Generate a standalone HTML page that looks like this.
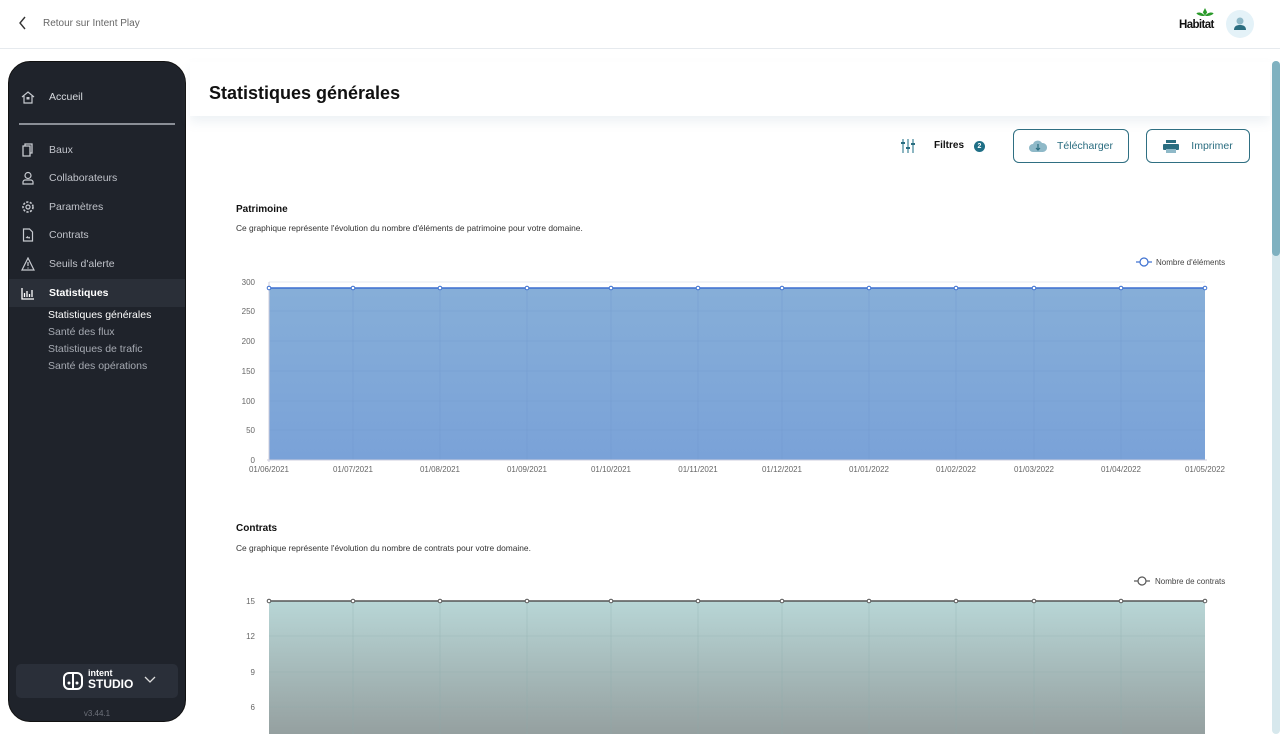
<!DOCTYPE html>
<html><head><meta charset="utf-8"><style>
*{box-sizing:border-box;margin:0;padding:0}
body{width:1280px;height:734px;overflow:hidden;background:#fff;font-family:"Liberation Sans",Arial,sans-serif;position:relative;color:#222}
.top{position:absolute;left:0;top:0;width:1280px;height:49px;border-bottom:1px solid #e6eaee;background:#fff}
.back{position:absolute;left:18px;top:16px;font-size:10px;color:#666;display:flex;align-items:center}
.back span{margin-left:15px}
.side{position:absolute;left:8px;top:61px;width:178px;height:661px;background:#1f232b;border-radius:22px;border:1px solid #111;color:#c0c3ca;font-size:10.5px}
.it{position:absolute;left:0;width:176px;height:28px;display:flex;align-items:center}
.it svg{position:absolute;left:12px}
.it span{position:absolute;left:40px}
.sub{position:absolute;left:39px;font-size:10.5px;color:#a6aab2}
.main-title{position:absolute;left:190px;top:62px;width:1080px;height:54px;background:#fff;box-shadow:0 6px 10px rgba(140,170,190,.15)}
.main-title h1{position:absolute;left:19px;top:21px;font-size:18px;font-weight:bold;color:#111}
.btn{position:absolute;top:129px;height:34px;border:1px solid #2f6f82;border-radius:6px;color:#2a6d80;font-size:10.5px;display:flex;align-items:center;justify-content:center}
.h{position:absolute;left:236px;font-size:10px;font-weight:bold;color:#111}
.d{position:absolute;left:236px;font-size:8.4px;color:#333}
.scroll{position:absolute;left:1272px;top:61px;width:8px;height:673px;background:#d7e8ed;border-radius:4px}
.thumb{position:absolute;left:0;top:0;width:8px;height:195px;background:#7fb1c0;border-radius:4px}
</style></head><body>
<div class="top">
 <div class="back"><svg width="10" height="14" viewBox="0 0 10 14"><path d="M7 1L2 7l5 6" fill="none" stroke="#333" stroke-width="1.4"/></svg><span>Retour sur Intent Play</span></div>
 <div style="position:absolute;left:1179px;top:19px;font-size:11.5px;font-weight:bold;letter-spacing:-.6px;color:#111">Habitat</div>
 <svg style="position:absolute;left:1196px;top:8px" width="18" height="13" viewBox="0 0 16 12"><path d="M8 0l2 4-2 3-2-3z M8 7C4 3 1 4 0 5c2 2 5 3 8 2z M8 7c4-4 7-3 8-2-2 2-5 3-8 2z" fill="#2a9a2a"/></svg>
 <div style="position:absolute;left:1226px;top:10px;width:28px;height:28px;border-radius:50%;background:#e4f2f8"><svg width="28" height="28" viewBox="0 0 28 28"><circle cx="14" cy="11" r="3.5" fill="#8fb9c8"/><path d="M8 20c0-4 3-5 6-5s6 1 6 5z" fill="#2a6d80"/></svg></div>
</div>
<div class="side">
 <div class="it" style="top:21px;color:#d8dbe0"><svg width="14" height="14" viewBox="0 0 14 14"><path d="M1 7L7 2l6 5M3 6v7h8V6" fill="none" stroke="#c7cad0" stroke-width="1.2"/><rect x="5.5" y="7" width="3" height="2.5" fill="#c7cad0"/></svg><span>Accueil</span></div>
 <div style="position:absolute;left:10px;top:61px;width:156px;height:2px;background:#8a8e96"></div>
 <div class="it" style="top:74px"><svg width="14" height="14" viewBox="0 0 14 14"><path d="M4 3V1h7v9H9M2 3h7v10H2z" fill="none" stroke="#c7cad0" stroke-width="1.3"/></svg><span>Baux</span></div>
 <div class="it" style="top:102px"><svg width="14" height="14" viewBox="0 0 14 14"><circle cx="7" cy="4.5" r="3" fill="none" stroke="#c7cad0" stroke-width="1.2"/><path d="M2 13v-2c0-1 1-2 2-2h6c1 0 2 1 2 2v2z" fill="none" stroke="#c7cad0" stroke-width="1.2"/></svg><span>Collaborateurs</span></div>
 <div class="it" style="top:131px"><svg width="14" height="14" viewBox="0 0 14 14"><circle cx="7" cy="7" r="2" fill="none" stroke="#c7cad0" stroke-width="1.2"/><circle cx="7" cy="7" r="5" fill="none" stroke="#c7cad0" stroke-width="1.6" stroke-dasharray="2.2 1.4"/></svg><span>Paramètres</span></div>
 <div class="it" style="top:159px"><svg width="14" height="14" viewBox="0 0 14 14"><path d="M2.5 1h6l3 3v9h-9z" fill="none" stroke="#c7cad0" stroke-width="1.2"/><path d="M4.5 10l2-2 1.5 1.5 1-1v2z" fill="#c7cad0"/></svg><span>Contrats</span></div>
 <div class="it" style="top:188px"><svg width="14" height="14" viewBox="0 0 14 14"><path d="M7 1L13 13H1z" fill="none" stroke="#c7cad0" stroke-width="1.2"/><path d="M7 5v4M7 10.5v1" stroke="#c7cad0" stroke-width="1.2"/></svg><span>Seuils d'alerte</span></div>
 <div class="it" style="top:217px;background:#2a2f38;color:#fff;font-weight:bold;height:28px"><svg width="14" height="14" viewBox="0 0 14 14"><path d="M1 2v11h12M3.5 11V7M6 11V5M8.5 11V8M11 11V4" fill="none" stroke="#fff" stroke-width="1.3"/></svg><span>Statistiques</span></div>
 <div class="sub" style="top:247px;color:#fff">Statistiques générales</div>
 <div class="sub" style="top:264px">Santé des flux</div>
 <div class="sub" style="top:281px">Statistiques de trafic</div>
 <div class="sub" style="top:298px">Santé des opérations</div>
 <div style="position:absolute;left:7px;top:602px;width:162px;height:34px;background:#2a2f39;border-radius:5px">
  <svg style="position:absolute;left:47px;top:8px" width="20" height="18" viewBox="0 0 20 18"><rect x="1" y="1" width="18" height="16" rx="5" fill="none" stroke="#fff" stroke-width="2"/><path d="M10 1v16" stroke="#fff" stroke-width="2"/><circle cx="6" cy="11" r="1.5" fill="#fff"/><circle cx="14" cy="11" r="1.5" fill="#fff"/></svg>
  <div style="position:absolute;left:72px;top:5px;color:#fff;font-size:9px;font-weight:bold;line-height:9px">intent</div>
  <div style="position:absolute;left:72px;top:14px;color:#fff;font-size:12px;font-weight:bold;line-height:13px">STUDIO</div>
  <svg style="position:absolute;left:128px;top:12px" width="12" height="8" viewBox="0 0 12 8"><path d="M1 1l5 5 5-5" fill="none" stroke="#ddd" stroke-width="1.3"/></svg>
 </div>
 <div style="position:absolute;left:0;width:176px;top:647px;text-align:center;font-size:8px;color:#6d717a">v3.44.1</div>
</div>
<div class="main-title"><h1>Statistiques générales</h1></div>
<svg style="position:absolute;left:901px;top:138px" width="14" height="16" viewBox="0 0 14 16"><path d="M2 1v14M7 1v14M12 1v14" stroke="#4f8ea0" stroke-width="1.3"/><path d="M0 5h4M5 10h4M10 6h4" stroke="#2a6d80" stroke-width="2"/></svg>
<div style="position:absolute;left:934px;top:140px;font-size:10px;font-weight:bold;color:#111">Filtres</div>
<div style="position:absolute;left:974px;top:141px;width:11px;height:11px;border-radius:50%;background:#1f6f86;color:#fff;font-size:7px;font-weight:bold;text-align:center;line-height:11px">2</div>
<div class="btn" style="left:1013px;width:116px"><svg width="18" height="12" viewBox="0 0 18 12" style="margin-right:10px"><path d="M4 12a4 4 0 010-8 5 5 0 019-1 4 4 0 011 9z" fill="#8fb9c8"/><path d="M9 4v6M7 8l2 2 2-2" stroke="#2a6d80" stroke-width="1.2" fill="none"/></svg>Télécharger</div>
<div class="btn" style="left:1146px;width:104px"><svg width="16" height="13" viewBox="0 0 16 13" style="margin-right:12px"><rect x="3" y="0" width="10" height="3" fill="#2a6d80"/><rect x="0" y="4" width="16" height="6" rx="1" fill="#2a6d80"/><rect x="3" y="9" width="10" height="4" fill="#8fb9c8"/></svg>Imprimer</div>

<div class="h" style="top:204px">Patrimoine</div>
<div class="d" style="top:223px">Ce graphique représente l'évolution du nombre d'éléments de patrimoine pour votre domaine.</div>
<div class="h" style="top:523px">Contrats</div>
<div class="d" style="top:543px">Ce graphique représente l'évolution du nombre de contrats pour votre domaine.</div>

<svg style="position:absolute;left:0;top:0" width="1270" height="734" font-family="Liberation Sans, Arial, sans-serif">
<defs>
<linearGradient id="g1" x1="0" y1="0" x2="0" y2="1"><stop offset="0" stop-color="#86aed8"/><stop offset="1" stop-color="#7aa2d8"/></linearGradient>
<linearGradient id="g2" x1="0" y1="0" x2="0" y2="1"><stop offset="0" stop-color="#b8d6d6"/><stop offset="1" stop-color="#939d9d"/></linearGradient>
</defs>
<g font-size="8" fill="#666">
<path d="M1136 262h16" stroke="#3b6fd0" stroke-width="1.2"/><circle cx="1144" cy="262" r="4" fill="#fff" stroke="#3b6fd0" stroke-width="1.2"/>
<text x="1156" y="265" fill="#444">Nombre d'éléments</text>
<path d="M1134 581h16" stroke="#555" stroke-width="1.2"/><circle cx="1142" cy="581" r="4" fill="#fff" stroke="#555" stroke-width="1.2"/>
<text x="1155" y="584" fill="#444">Nombre de contrats</text>
<path d="M269 282h936" stroke="#e4e8f0"/>
<rect x="269" y="288" width="936" height="172" fill="url(#g1)"/>
<g stroke="#6f96cc" stroke-width=".6" opacity=".6">
<path d="M269 311h936M269 341h936M269 371h936M269 401h936M269 430h936"/>
<path d="M353 288v172M440 288v172M527 288v172M611 288v172M698 288v172M782 288v172M869 288v172M956 288v172M1034 288v172M1121 288v172"/>
</g>
<path d="M269 288h936" stroke="#3b6fd0" stroke-width="1.4"/>
<path d="M269 282v180M267 460h940" stroke="#ccd" stroke-width="1"/>
<g fill="#fff" stroke="#3b6fd0" stroke-width="1">
<circle cx="269" cy="288" r="1.8"/><circle cx="353" cy="288" r="1.8"/><circle cx="440" cy="288" r="1.8"/><circle cx="527" cy="288" r="1.8"/><circle cx="611" cy="288" r="1.8"/><circle cx="698" cy="288" r="1.8"/><circle cx="782" cy="288" r="1.8"/><circle cx="869" cy="288" r="1.8"/><circle cx="956" cy="288" r="1.8"/><circle cx="1034" cy="288" r="1.8"/><circle cx="1121" cy="288" r="1.8"/><circle cx="1205" cy="288" r="1.8"/>
</g>
<g text-anchor="end"><text x="255" y="285">300</text><text x="255" y="314">250</text><text x="255" y="344">200</text><text x="255" y="374">150</text><text x="255" y="404">100</text><text x="255" y="433">50</text><text x="255" y="463">0</text></g>
<g text-anchor="middle"><text x="269" y="472">01/06/2021</text><text x="353" y="472">01/07/2021</text><text x="440" y="472">01/08/2021</text><text x="527" y="472">01/09/2021</text><text x="611" y="472">01/10/2021</text><text x="698" y="472">01/11/2021</text><text x="782" y="472">01/12/2021</text><text x="869" y="472">01/01/2022</text><text x="956" y="472">01/02/2022</text><text x="1034" y="472">01/03/2022</text><text x="1121" y="472">01/04/2022</text><text x="1205" y="472">01/05/2022</text></g>

<rect x="269" y="601" width="936" height="140" fill="url(#g2)"/>
<g stroke="#8aa" stroke-width=".6" opacity=".5">
<path d="M269 636h936M269 672h936M269 707h936"/>
<path d="M353 601v140M440 601v140M527 601v140M611 601v140M698 601v140M782 601v140M869 601v140M956 601v140M1034 601v140M1121 601v140"/>
</g>
<path d="M269 601h936" stroke="#555" stroke-width="1.4"/>
<g fill="#fff" stroke="#555" stroke-width="1">
<circle cx="269" cy="601" r="1.8"/><circle cx="353" cy="601" r="1.8"/><circle cx="440" cy="601" r="1.8"/><circle cx="527" cy="601" r="1.8"/><circle cx="611" cy="601" r="1.8"/><circle cx="698" cy="601" r="1.8"/><circle cx="782" cy="601" r="1.8"/><circle cx="869" cy="601" r="1.8"/><circle cx="956" cy="601" r="1.8"/><circle cx="1034" cy="601" r="1.8"/><circle cx="1121" cy="601" r="1.8"/><circle cx="1205" cy="601" r="1.8"/>
</g>
<g text-anchor="end"><text x="255" y="604">15</text><text x="255" y="639">12</text><text x="255" y="675">9</text><text x="255" y="710">6</text></g>
</g>
</svg>
<div class="scroll"><div class="thumb"></div></div>
</body></html>
